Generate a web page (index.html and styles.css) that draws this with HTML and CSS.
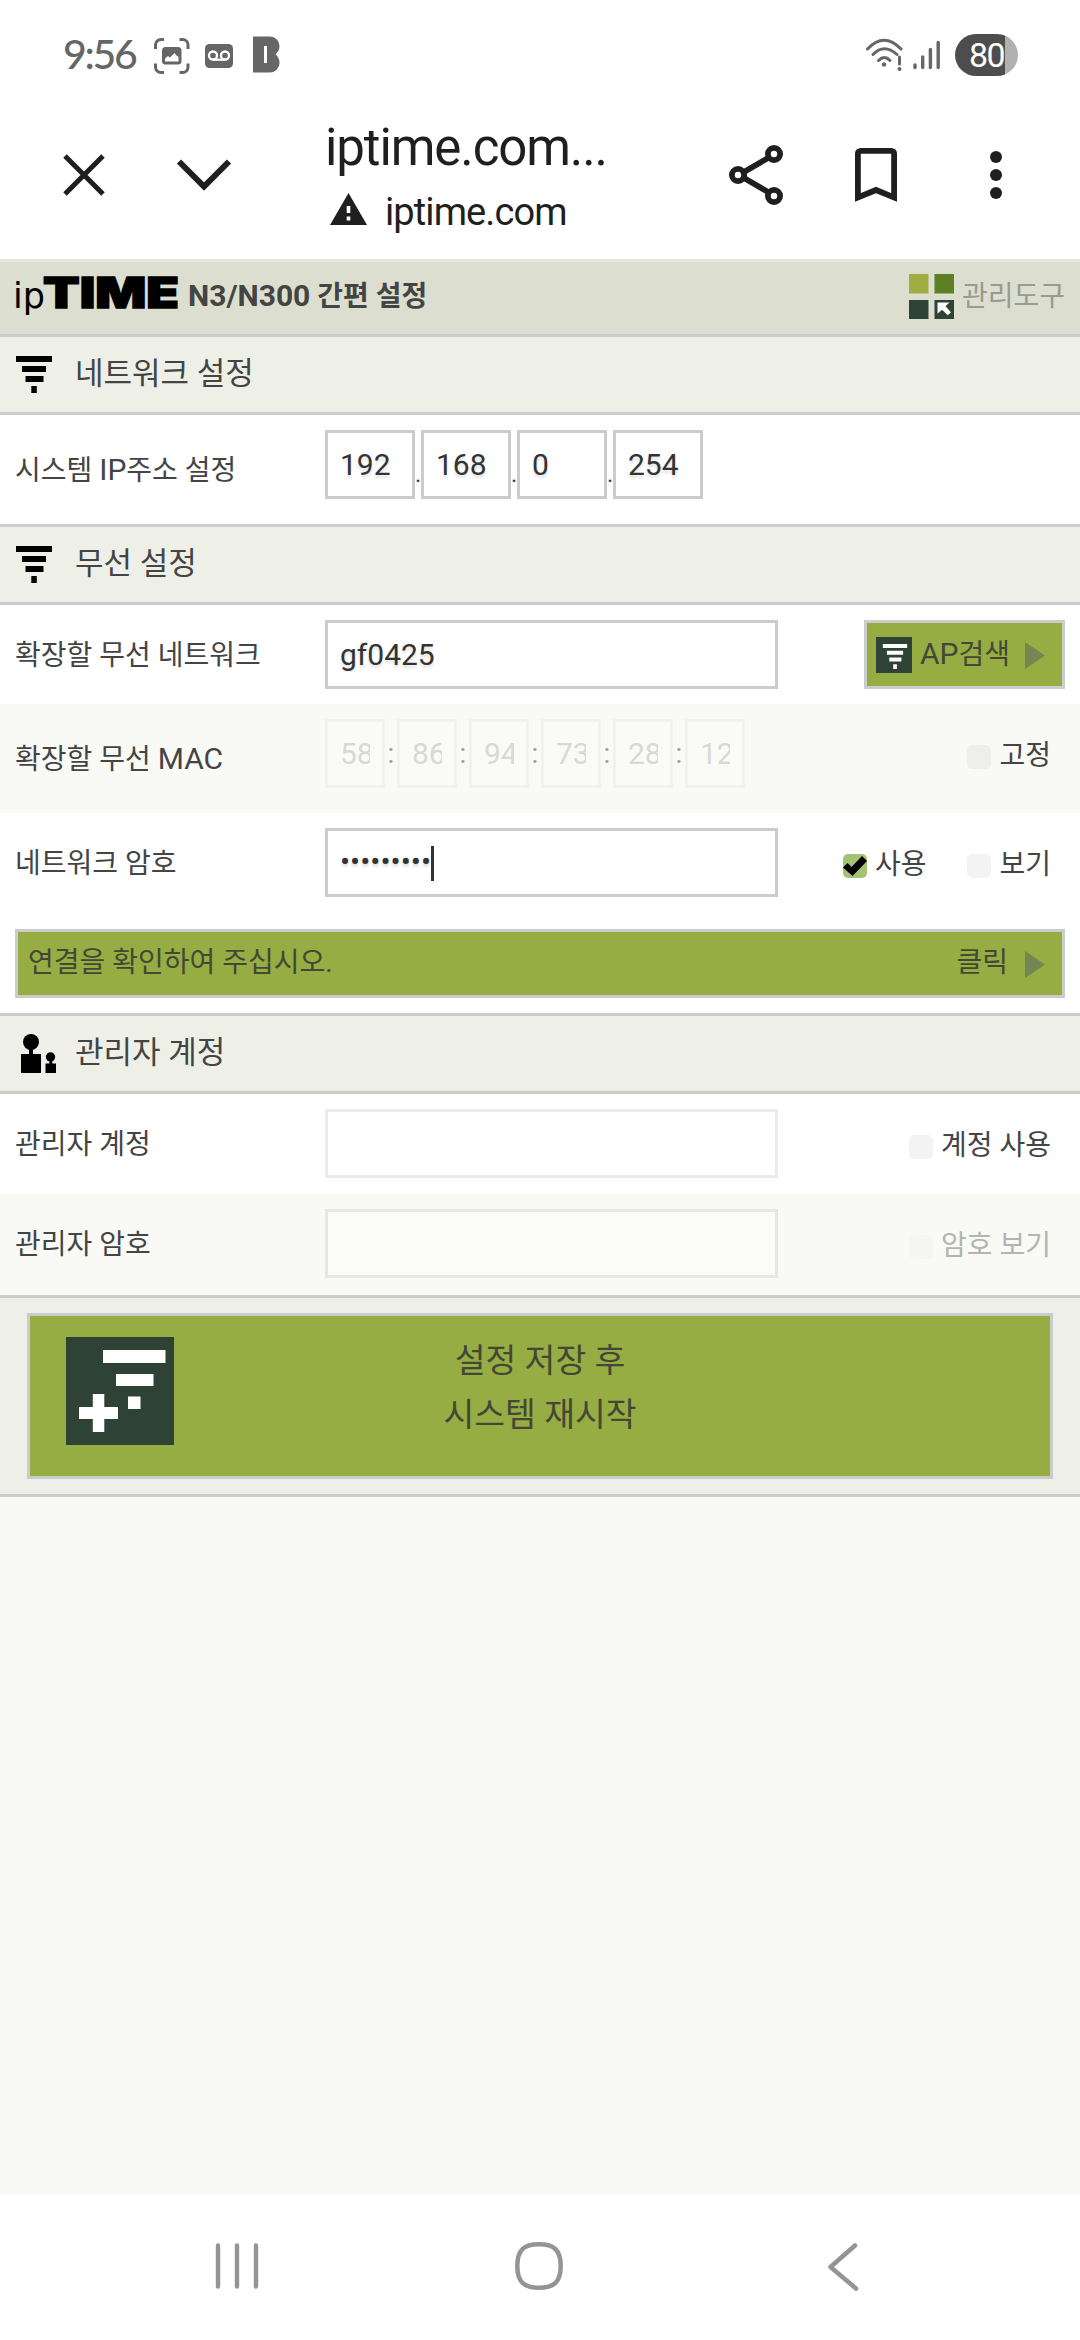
FILE: index.html
```html
<!DOCTYPE html>
<html lang="ko">
<head>
<meta charset="utf-8">
<title>ipTIME N3/N300 간편 설정</title>
<link rel="stylesheet" href="styles.css">
</head>
<body>
<svg class="defs" width="0" height="0">
  <symbol id="signal" viewBox="0 0 36 37">
    <path d="M0 0h36v6H0zM6 10h24v6H6zM9.5 20h18v6h-18zM15.300 30h5.500v7h-5.500z"/>
  </symbol>
</svg>

<header class="status">
  <span class="clock">9:56</span>
  <svg class="ic-capture" width="36" height="36" viewBox="0 0 36 36" fill="none" stroke="#666" stroke-width="3">
    <path d="M1.500 11V7a5.500 5.500 0 0 1 5.500-5.500h3M25.500 1.500h3a5.500 5.500 0 0 1 5.500 5.500v4M34 25.500v3.500a5.500 5.500 0 0 1-5.500 5.500h-3M10 34.500H7A5.500 5.500 0 0 1 1.500 29v-3.500"/>
    <rect x="8" y="9" width="19.500" height="17.500" rx="3.500" fill="#666" stroke="none"/>
    <path d="M11 23.500v-3l3-2.500 2 1.500 4.500-4.500 2 2.500 2 1.500v4.500z" fill="#fff" stroke="none"/>
  </svg>
  <svg class="ic-voicemail" width="28" height="24" viewBox="0 0 28 24">
    <rect width="28" height="24" rx="4.500" fill="#666"/>
    <g fill="none" stroke="#fff" stroke-width="2.300"><circle cx="8" cy="11.500" r="4"/><circle cx="20" cy="11.500" r="4"/><path d="M8 15.700h12"/></g>
  </svg>
  <svg class="ic-b" width="28" height="37" viewBox="0 0 28 37">
    <path d="M0 .5h17a9.500 9.500 0 0 1 9.500 9.500c0 3.500-1.500 6-4 8.500 2.500 2 4 4.500 4 8a9.500 9.500 0 0 1-9.500 10H0z" fill="#666"/>
    <path d="M11 10h3v17h-3z" fill="#fff"/>
  </svg>
  <svg class="ic-wifi" width="38" height="34" viewBox="0 0 38 34" fill="none" stroke="#666" stroke-width="3" stroke-linecap="round">
    <path d="M1.500 11Q18 -6.500 35 11M7 16.500q11-11.500 24 0M12.500 22.500q6-6 11.500 0"/>
    <path d="M33.500 19v7"/>
    <circle cx="18" cy="26.500" r="2.200" fill="#666" stroke="none"/><circle cx="33.500" cy="31" r="2" fill="#666" stroke="none"/>
  </svg>
  <svg class="ic-bars" width="28" height="30" viewBox="0 0 28 30" stroke="#666" stroke-width="3.400" stroke-linecap="round">
    <path d="M2 25v2.500M9.700 17v10.500M17.400 9.500v18M25.200 2.500v25"/>
  </svg>
  <div class="battery">80</div>
</header>

<nav class="toolbar">
  <svg class="ic-close" width="44" height="44" viewBox="0 0 44 44" fill="none" stroke="#1f1f1f" stroke-width="5"><path d="M3 3l38 38M41 3L3 41"/></svg>
  <svg class="ic-down" width="56" height="34" viewBox="0 0 56 34" fill="none" stroke="#1f1f1f" stroke-width="6"><path d="M3 3.500l25 25 25-25"/></svg>
  <div class="page-id">
    <div class="page-title">iptime.com...</div>
    <div class="page-host">
      <svg width="37" height="32" viewBox="0 0 37 32"><path d="M18.500 0L37 32H0z" fill="#1f1f1f"/><path d="M16.700 13h3.600v7h-3.600zM16.700 23.500h3.600v4h-3.600z" fill="#fff"/></svg>
      <span>iptime.com</span>
    </div>
  </div>
  <svg class="ic-share" width="54" height="60" viewBox="0 0 54 60" fill="none" stroke="#1f1f1f" stroke-width="5.800">
    <path d="M15 27l24-14M15 33l24 14"/><circle cx="9" cy="30" r="6.100"/><circle cx="45" cy="9" r="6.100"/><circle cx="45" cy="51" r="6.100"/>
  </svg>
  <svg class="ic-mark" width="42" height="54" viewBox="0 0 42 54" fill="none" stroke="#1f1f1f" stroke-width="5.800"><path d="M2.900 49.500V5.500a2.600 2.600 0 0 1 2.600-2.600h31a2.600 2.600 0 0 1 2.600 2.600v44L21 42z"/></svg>
  <svg class="ic-more" width="12" height="48" viewBox="0 0 12 48" fill="#1f1f1f"><circle cx="6" cy="6" r="6"/><circle cx="6" cy="24" r="6"/><circle cx="6" cy="42" r="6"/></svg>
</nav>

<main>
  <div class="brand">
    <svg class="logo" width="166" height="48" viewBox="0 0 166 48">
      <text class="logo-ip" x="-1" y="37" textLength="32" lengthAdjust="spacingAndGlyphs">ip</text>
      <text class="logo-time" x="29" y="36.500" textLength="136" lengthAdjust="spacingAndGlyphs">TIME</text>
    </svg>
    <h1><span class="lat">N3/N300</span> 간편 설정</h1>
    <a class="tools">
      <svg width="45" height="45" viewBox="0 0 45 45">
        <path d="M0 0h19.500v19.500H0z" fill="#a0ae41"/><path d="M25.500 0H45v19.500H25.500z" fill="#5e8024"/>
        <path d="M0 26h19.500v19H0zM25.500 26H45v19H25.500z" fill="#2f4236"/>
        <path d="M28.500 28.500h12l-4 3.800 5.500 6-3.200 3-5.800-5.600-4.500 4z" fill="#fff"/>
      </svg>
      관리도구
    </a>
  </div>

  <h2><svg class="h-icon" width="36" height="37"><use href="#signal"/></svg>네트워크 설정</h2>
  <section class="row row-ip">
    <label>시스템 <span class="lat">IP</span>주소 설정</label>
    <div class="ip">
      <input value="192"><i>.</i><input value="168"><i>.</i><input value="0"><i>.</i><input value="254">
    </div>
  </section>

  <h2 class="ruled"><svg class="h-icon" width="36" height="37"><use href="#signal"/></svg>무선 설정</h2>
  <section class="row row-ap">
    <label>확장할 무선 네트워크</label>
    <input class="wide" value="gf0425">
    <a class="btn scan">
      <svg class="scan-icon" width="36" height="36" viewBox="0 0 36 36"><path d="M0 0h36v36H0z" fill="#2f4236"/><use href="#signal" x="6" y="7" width="26" height="25" fill="#fff"/></svg>
      <span><span class="lat">AP</span>검색</span>
      <svg class="arrow" width="20" height="27" viewBox="0 0 20 27"><path d="M0 0l20 13.500L0 27z"/></svg>
    </a>
  </section>
  <section class="row row-mac alt">
    <label>확장할 무선 <span class="lat">MAC</span></label>
    <div class="mac">
      <input value="58"><i>:</i><input value="86"><i>:</i><input value="94"><i>:</i><input value="73"><i>:</i><input value="28"><i>:</i><input value="12">
    </div>
    <div class="checks"><span class="check"><b></b>고정</span></div>
  </section>
  <section class="row row-pw">
    <label>네트워크 암호</label>
    <div class="wide secret">•••••••••<span class="caret"></span></div>
    <div class="checks">
      <span class="check on"><b><svg width="24" height="24" viewBox="0 0 24 24"><path d="M0 13.500l4.500-4.500 4 4L19 2l5 5L9.500 22z"/></svg></b>사용</span>
      <span class="check"><b></b>보기</span>
    </div>
  </section>
  <section class="notice">
    <a class="btn">
      <span>연결을 확인하여 주십시오.</span>
      <span class="go">클릭</span>
      <svg class="arrow" width="20" height="27" viewBox="0 0 20 27"><path d="M0 0l20 13.500L0 27z"/></svg>
    </a>
  </section>

  <h2 class="ruled"><svg class="h-icon person" width="36" height="40" viewBox="0 0 36 40">
    <circle cx="10" cy="8" r="8"/><path d="M8 14h4v6h8v19H0V20h8zM28.300 26h3v3.500H35V39H24.500v-9.500h3.800z"/><circle cx="29.500" cy="23" r="4.700"/>
  </svg>관리자 계정</h2>
  <section class="row row-user">
    <label>관리자 계정</label>
    <input class="wide off">
    <div class="checks"><span class="check"><b></b>계정 사용</span></div>
  </section>
  <section class="row row-userpw alt">
    <label>관리자 암호</label>
    <input class="wide off">
    <div class="checks"><span class="check off"><b></b>암호 보기</span></div>
  </section>

  <section class="save">
    <a class="save-btn">
      <svg width="108" height="108" viewBox="0 0 108 108"><path d="M0 0h108v108H0z" fill="#2f4236"/>
        <path d="M37 13h62.500v13H37zM50 37h37.500v12H50zM62 59.500h12.500V72H62zM13 70h13.800V57h11.500v13H52v12H38.300v13H26.800V82H13z" fill="#fff"/></svg>
      <span>설정 저장 후<br>시스템 재시작</span>
    </a>
  </section>
</main>

<footer class="navbar">
  <svg width="44" height="48" viewBox="0 0 44 48" stroke="#949494" stroke-width="4.400" stroke-linecap="round"><path d="M3 3.500v41M22 3.500v41M41 3.500v41"/></svg>
  <svg class="home" width="48" height="48" viewBox="0 0 48 48" fill="none" stroke="#949494" stroke-width="4.500"><path d="M24 2.300C39 2.300 45.700 8 45.700 24S39 45.700 24 45.700 2.300 40 2.300 24 9 2.300 24 2.300z"/></svg>
  <svg width="32" height="50" viewBox="0 0 32 50" fill="none" stroke="#949494" stroke-width="4.500" stroke-linecap="round" stroke-linejoin="round"><path d="M28 3.500L3.500 25 29 46.500"/></svg>
</footer>
</body>
</html>
```
FILE: styles.css
```css
* { box-sizing: border-box; }
body {
  margin: 0;
  width: 1080px;
  height: 2340px;
  display: flex;
  flex-direction: column;
  overflow: hidden;
  background: #fff;
  color: #444;
  font: 28px/40px Roboto, "Noto Sans CJK KR", sans-serif;
}
svg { display: block; flex: none; }
.defs { position: absolute; }
.lat { font-size: 30px; }
i { font-style: normal; }

/* phone status bar */
.status { height: 110px; display: flex; align-items: flex-start; padding-left: 63px; color: #666; }
.clock { width: 91px; margin-top: 30px; font: 500 41px/48px Lato, sans-serif; letter-spacing: -2.3px; }
.ic-capture { margin-top: 38px; }
.ic-voicemail { margin: 44px 0 0 14.500px; }
.ic-b { margin: 36px 0 0 20px; }
.ic-wifi { margin: 38px 0 0 auto; }
.ic-bars { margin: 40px 0 0 9px; }
.battery {
  width: 63px; height: 42px; margin: 34px 62px 0 14px; padding-left: 14px;
  border-radius: 21px; background: linear-gradient(90deg, #4d4d4d 50px, #b0b0b0 50px);
  color: #fff; font: 400 34px/42px Roboto, sans-serif; letter-spacing: -1.5px;
}

/* browser toolbar */
.toolbar { height: 149px; display: flex; align-items: flex-start; padding-left: 62px; color: #1f1f1f; }
.ic-close { margin-top: 43px; }
.ic-down { margin: 48px 0 0 70px; }
.page-id { width: 400px; padding: 6px 0 0 93px; white-space: nowrap; }
.page-title { font-size: 51px; line-height: 64px; letter-spacing: -1.1px; }
.page-host { display: flex; align-items: flex-start; gap: 18px; padding: 13px 0 0 5px; font-size: 38px; line-height: 44px; letter-spacing: -.9px; }
.page-host span { margin-top: -3px; }
.ic-share { margin: 35px 0 0 97px; }
.ic-mark { margin: 38px 0 0 72px; }
.ic-more { margin: 41px 0 0 93px; }

/* settings page */
main { flex: 1; border-top: 3px solid #e5e5e5; background: #f8f9f5; }
.brand { height: 75px; display: flex; border-bottom: 3px solid #ccc; background: #dcdfcf; padding: 9px 15px 0 14px; }
.logo { overflow: visible; }
.logo-ip { font: 35px "DejaVu Sans", sans-serif; }
.logo-time { font: 900 43px Inter, sans-serif; stroke: #000; stroke-width: 1.500px; }
h1 { margin: 5px 0 0 8px; font-size: 28px; line-height: 40px; font-weight: 700; }
.tools { display: flex; gap: 8px; margin: 3px 0 0 auto; line-height: 45px; color: #999a92; }
h2 {
  height: 78px; margin: 0; display: flex; border-bottom: 3px solid #ccc; background: #eef0e8;
  font-size: 31px; line-height: 73px; font-weight: 400;
}
h2.ruled { height: 81px; border-top: 3px solid #ccc; }
.h-icon { margin: 19px 23px 0 16px; }
.person { margin: 18px 18px 0 21px; }

.row { display: flex; background: #fff; padding: 15px 15px 0 15px; }
.row label { width: 310px; }
.alt { background: #f9faf6; }
.row-ip { height: 109px; }
.row-ip label { padding-top: 20px; }
.row-ap { height: 99px; }
.row-ap label { padding-top: 16px; }
.row-mac { height: 109px; }
.row-mac label { padding-top: 20px; }
.row-pw { height: 101px; }
.row-pw label { padding-top: 16px; }
.row-user { height: 100px; }
.row-user label { padding-top: 16px; }
.row-userpw { height: 101px; }
.row-userpw label { padding-top: 16px; }

input, .wide {
  height: 69px; padding: 0 12px; border: 3px solid #ccc; border-radius: 0; background: #fff; color: #333;
  font: 30px/60px Roboto, sans-serif; text-shadow: 0 3px 3px rgba(0, 0, 0, .12); outline: 0;
}
.wide { width: 453px; }
.off { border-color: #ebebeb; }
.alt .wide { background: #fbfbf9; border-color: #e6e6e4; }
.ip, .mac { display: flex; }
.ip input { width: 90px; }
.ip i { width: 6px; padding-top: 24px; font-size: 24px; text-align: center; }
.mac input { width: 60px; border-color: #f1f2ee; background: #fafbf7; color: #d8d9d5; text-shadow: none; }
.mac i { width: 12px; padding-top: 15px; text-align: center; color: #9c9d9a; }
.secret { display: flex; align-items: flex-start; line-height: 62px; }
.caret { width: 3px; height: 35px; margin-top: 15px; background: #333; }

.btn { display: flex; height: 69px; border: 3px solid #ccc; background: #95ad42; color: #444736; line-height: 62px; }
.scan { width: 201px; margin-left: auto; padding-left: 9px; }
.scan-icon { margin: 14px 8px 0 0; }
.arrow { fill: #748651; margin: 19px 17px 0 auto; }
.notice { height: 99px; background: #fff; padding: 15px 15px 0; }
.notice .btn { padding-left: 10px; }
.go { margin-left: auto; }
.notice .arrow { margin-left: 17px; }

.checks { margin-left: auto; display: flex; gap: 41px; padding: 15px 14px 0 0; }
.check { display: flex; gap: 8px; line-height: 43px; }
.check b { width: 24px; height: 24px; margin-top: 11px; border-radius: 5px; background: #f3f3f3; }
.alt .check b { background: #eeefeb; }
.on b { background: #a3c373 !important; }
.check.off { color: #b3b4b1; }
.check.off b { background: #f5f6f2 !important; }

.save { height: 202px; border: solid #ccc; border-width: 3px 0; background: #eef0e8; padding: 15px 27px 0; }
.save-btn {
  height: 166px; display: grid; grid-template-columns: 108px 1fr 108px; border: 3px solid #ccc; background: #95ad42;
  padding: 21px 36px 0; color: #444736; font-size: 33.500px; line-height: 54px; text-align: center;
}
.save-btn span { margin-top: -3px; }

/* gesture bar */
.navbar { height: 146px; display: flex; padding: 48px 221px 0 215px; background: #fff; }
.home { margin: 0 auto 0 256px; }
```
